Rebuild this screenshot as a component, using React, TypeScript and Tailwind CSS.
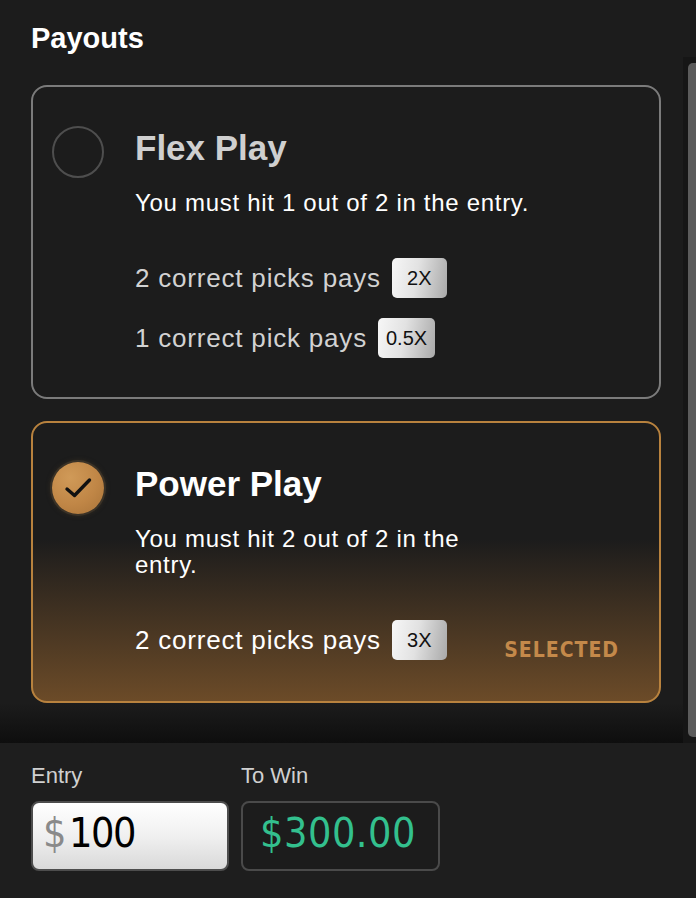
import React from "react";

function Badge({ children }: { children: React.ReactNode }) {
  return (
    <span className="inline-flex h-[40px] min-w-[55px] items-center justify-center rounded-[5px] bg-[linear-gradient(100deg,#f7f7f7_0%,#e2e2e2_45%,#a9a9a9_100%)] px-[8px] text-[20px] leading-none text-[#111]">
      {children}
    </span>
  );
}

function PayRow({ label, badge, light }: { label: string; badge: string; light?: boolean }) {
  return (
    <div className="flex h-[40px] items-center gap-[11px]">
      <span className={`text-[26px] leading-none tracking-[0.8px] ${light ? "text-white" : "text-[#d2d2d2]"}`}>{label}</span>
      <Badge>{badge}</Badge>
    </div>
  );
}

export default function App() {
  return (
    <div className="flex h-[898px] w-[696px] flex-col overflow-hidden bg-[#1c1c1c] font-['Liberation_Sans',Arial,sans-serif]">
      {/* scroll area */}
      <div className="flex h-[743px] bg-[linear-gradient(to_bottom,#1c1c1c_calc(100%-40px),#0e0e0e_100%)]">
        <div className="flex w-[683px] flex-col pl-[31px] pr-[22px] pt-[24px]">
          <h2 className="text-[29px] font-bold leading-[28px] text-white">Payouts</h2>

          {/* Flex Play */}
          <div className="mt-[33px] flex h-[314px] rounded-[16px] border-2 border-[#7b7b7b] pl-[19px] pt-[39px]">
            <div className="h-[52px] w-[52px] shrink-0 rounded-full border-2 border-[#4e4e4e]" />
            <div className="ml-[31px] flex flex-col pt-[1px]">
              <div className="text-[35px] font-bold leading-[42px] text-[#cfcfcf]">Flex Play</div>
              <div className="mt-[21px] text-[24px] leading-[26px] tracking-[0.7px] text-white">
                You must hit 1 out of 2 in the entry.
              </div>
              <div className="mt-[42px] flex flex-col gap-[20px]">
                <PayRow label="2 correct picks pays" badge="2X" />
                <PayRow label="1 correct pick pays" badge="0.5X" />
              </div>
            </div>
          </div>

          {/* Power Play */}
          <div className="mt-[22px] flex h-[282px] rounded-[16px] border-2 border-[#b8823e] bg-[linear-gradient(to_bottom,#1c1c1c_42%,#6c4b28_100%)] pb-[39px] pl-[19px] pr-[40px] pt-[39px]">
            <div className="relative h-[52px] w-[52px] shrink-0 rounded-full bg-[radial-gradient(circle_at_35%_30%,#d09a58_0%,#c08646_55%,#a87339_100%)] shadow-[0_0_0_2px_#3a3227,0_0_4px_2px_rgba(60,50,35,0.6)]">
              <svg viewBox="0 0 52 52" className="absolute inset-0 h-[52px] w-[52px]">
                <path d="M15 27 L22.5 33.5 L37.5 18" fill="none" stroke="#111" strokeWidth="3.4" strokeLinecap="round" strokeLinejoin="round" />
              </svg>
            </div>
            <div className="ml-[31px] flex flex-1 flex-col pt-[1px]">
              <div className="text-[35px] font-bold leading-[42px] text-white">Power Play</div>
              <div className="mt-[21px] text-[24px] leading-[26px] tracking-[0.7px] text-white">
                You must hit 2 out of 2 in the entry.
              </div>
              <div className="mt-[42px]">
                <PayRow label="2 correct picks pays" badge="3X" light />
              </div>
            </div>
            <div className="ml-[20px] self-end pb-[1px] font-['DejaVu_Sans_Condensed','DejaVu_Sans',sans-serif] text-[21px] font-semibold leading-[21px] tracking-[1px] text-[#c4894a]">
              SELECTED
            </div>
          </div>
        </div>

        {/* scrollbar */}
        <div className="mt-[57px] flex h-[686px] w-[13px] bg-[#161616] pl-[5px] pt-[6px] pb-[6px]">
          <div className="h-full w-[8px] rounded-l-[5px] bg-[#5b5b5b]" />
        </div>
      </div>

      {/* bottom panel */}
      <div className="flex flex-1 gap-[12px] bg-[#1e1e1e] pl-[31px] pt-[20px]">
        <div className="flex w-[198px] flex-col">
          <div className="text-[22px] leading-[26px] text-[#d0d0d0]">Entry</div>
          <div className="mt-[12px] flex h-[70px] items-center rounded-[8px] border-2 border-[#4d4d4d] bg-[linear-gradient(to_bottom,#ffffff_0%,#f0f0f0_50%,#d9d9d9_100%)] pb-[6px] pl-[10px] font-['DejaVu_Sans_Condensed','DejaVu_Sans',sans-serif] text-[41px] leading-none tracking-[-1.5px]">
            <span className="text-[#8a8a8a]">$</span>
            <span className="ml-[4px] text-black">100</span>
          </div>
        </div>
        <div className="flex w-[199px] flex-col">
          <div className="text-[22px] leading-[26px] text-[#d0d0d0]">To Win</div>
          <div className="mt-[12px] flex h-[70px] items-center rounded-[8px] border-2 border-[#4a4a4a] bg-[#1c1c1c] pb-[6px] pl-[17px] font-['DejaVu_Sans_Condensed','DejaVu_Sans',sans-serif] text-[41px] leading-none tracking-[0.5px] text-[#33c08e]">
            $300.00
          </div>
        </div>
      </div>
    </div>
  );
}
